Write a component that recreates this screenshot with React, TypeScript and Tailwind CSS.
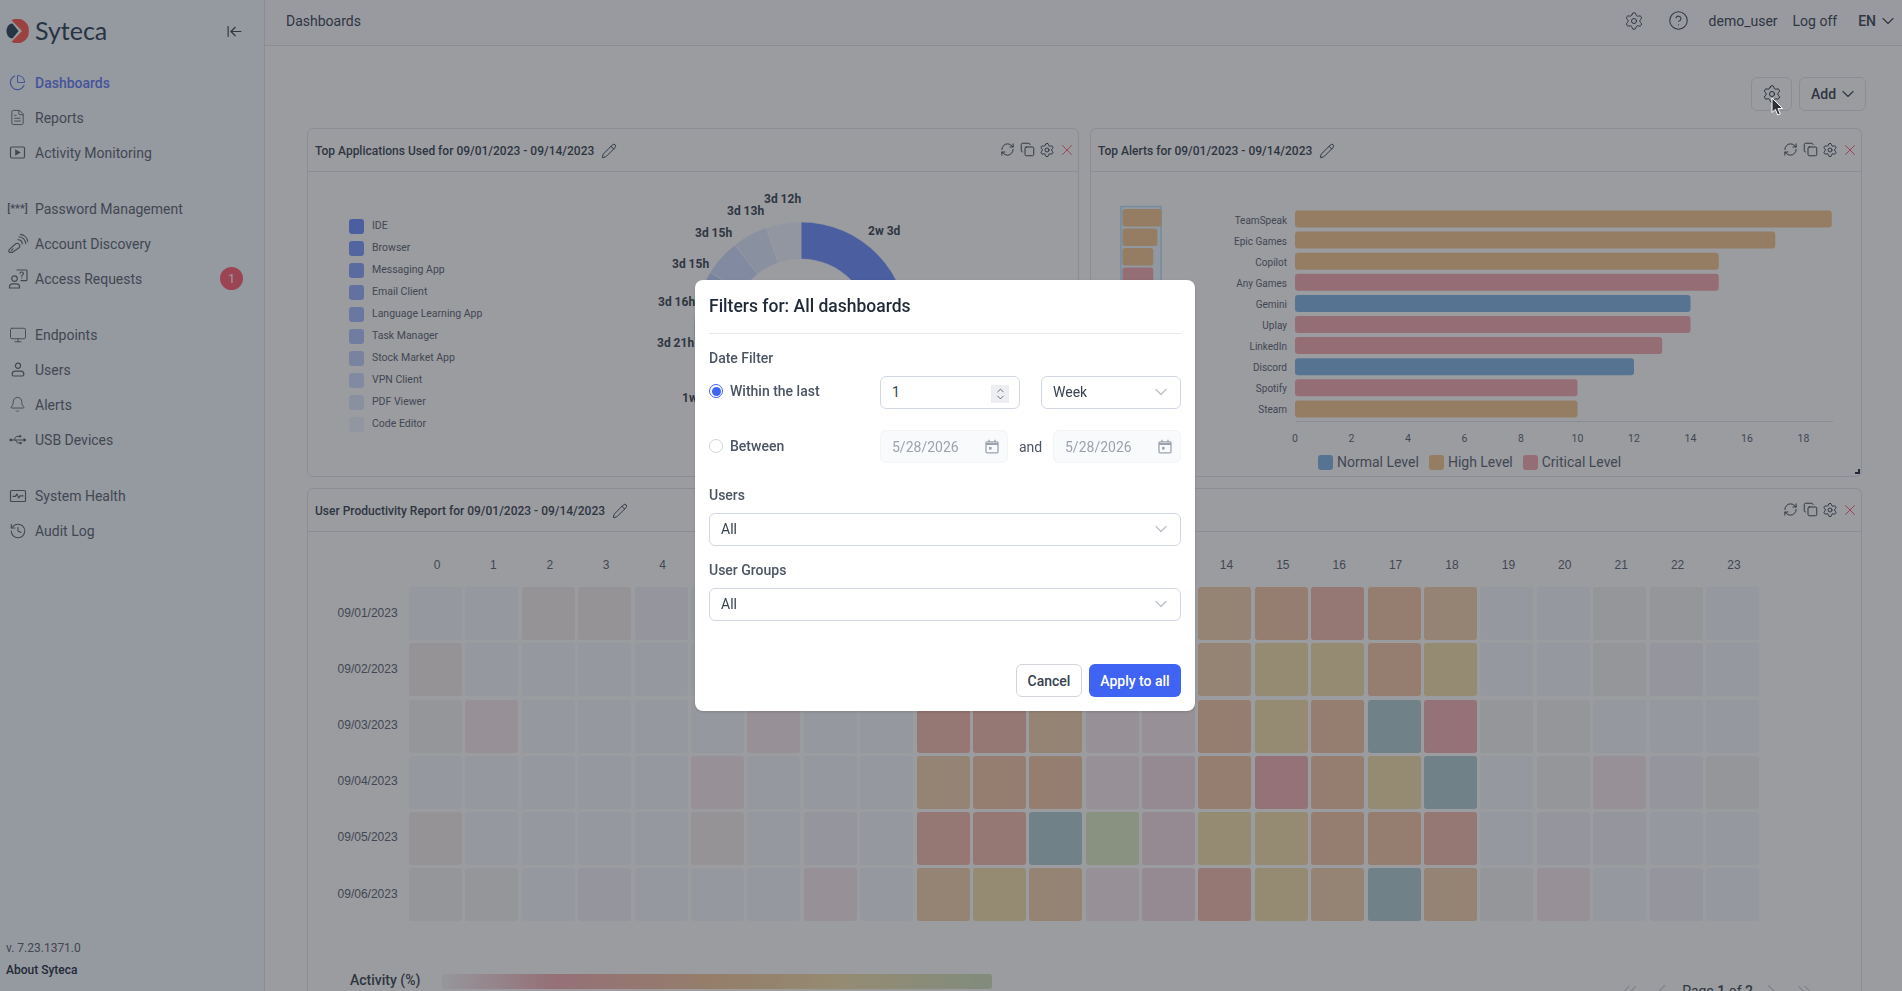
import React from "react";
import {
  ArrowLeftToLine, ChartPie, ChevronDown, ChevronLeft, ChevronRight, ChevronsLeft, ChevronsRight, ChevronUp, CircleHelp, Copy, FileText, History, Monitor, Pencil,
  RefreshCw, Settings, Bell, X,
} from "lucide-react";

function PlayBox() {
  return (
    <svg width="17" height="17" viewBox="0 0 17 17" fill="none" stroke="currentColor" strokeWidth="1.2">
      <rect x="1.5" y="3" width="14" height="11" rx="1.2" />
      <path d="M6.8 6.2v4.6l3.8-2.3z" fill="currentColor" />
    </svg>
  );
}
function KeyWaves() {
  return (
    <svg width="22" height="22" viewBox="0 0 22 22" fill="none" stroke="currentColor" strokeWidth="1.1" strokeLinecap="round">
      <path d="M2.2 16.6l6.2-5.6c1-.9 2.4-.9 3.3 0l.6.7c.9 1 .7 2.3-.3 3.1l-6.7 4.6H2.6l-1-1.3z" />
      <path d="M4.4 17.4l1.8-1.5" />
      <path d="M11 6.6c2.2.1 4.1 2 4.3 4.3" />
      <path d="M12 3.8c3.6.2 6.6 3.2 6.8 6.9" />
      <path d="M13.4 1.4c4 .5 7 3.6 7.4 7.3" />
    </svg>
  );
}
function UserAsk() {
  return (
    <svg width="20" height="20" viewBox="0 0 20 20" fill="none" stroke="currentColor" strokeWidth="1.2" strokeLinecap="round">
      <circle cx="6.5" cy="9.6" r="2.8" />
      <path d="M1.5 19v-1.2c0-1.7 1.4-3 3-3h4c1.6 0 3 1.3 3 3V19z" />
      <path d="M9 1h9.2c.5 0 .8.3.8.8v9c0 .5-.3.8-.8.8H13" />
      <path d="M12 4.4c.2-1 1-1.5 1.9-1.4.9.1 1.6.8 1.5 1.7-.1 1.2-1.6 1.2-1.6 2.5" />
      <path d="M13.8 9v.1" />
    </svg>
  );
}
function UserIcon() {
  return (
    <svg width="14" height="15" viewBox="0 0 14 15" fill="none" stroke="currentColor" strokeWidth="1.2">
      <circle cx="7" cy="3.8" r="2.6" />
      <path d="M1.2 12.2c0-1.7 1.4-3 3-3h5.6c1.6 0 3 1.3 3 3v.6c0 .7-.5 1.2-1.2 1.2H2.4c-.7 0-1.2-.5-1.2-1.2z" />
    </svg>
  );
}
function UsbIcon() {
  return (
    <svg width="18" height="12" viewBox="0 0 18 12" fill="currentColor" stroke="currentColor" strokeWidth="1" strokeLinecap="round" strokeLinejoin="round">
      <circle cx="1.8" cy="6" r="1.4" stroke="none" />
      <path d="M2 6h14" fill="none" />
      <path d="M15.2 4.8 17 6l-1.8 1.2z" />
      <path d="M4.8 6 7.4 2.4h2.4" fill="none" />
      <rect x="10" y="1.2" width="2.2" height="2.2" stroke="none" />
      <path d="M6.4 6 8.6 9h2" fill="none" />
      <circle cx="11.6" cy="9" r="1.3" stroke="none" />
    </svg>
  );
}
function HealthBox() {
  return (
    <svg width="18" height="18" viewBox="0 0 18 18" fill="none" stroke="currentColor" strokeWidth="1.2" strokeLinejoin="round">
      <rect x="1.5" y="3.5" width="15" height="11" rx="1" />
      <path d="M3.5 9.4h3l1.3-2.4 2 4 1.3-2.2h3.4" />
    </svg>
  );
}
function Logo() {
  return (
    <svg width="23" height="24" viewBox="0 0 23 24">
      <path d="M6.5 4.5 12.5 12 6.5 19.5C3 19.5.5 16 .5 12S3 4.5 6.5 4.5z" fill="#3f5266" />
      <path d="M5.5 1.3A11.5 11.5 0 0 1 22.8 12 11.5 11.5 0 0 1 5.5 22.7L16 12z" fill="#ff6a60" />
    </svg>
  );
}
function CalendarIcon() {
  return (
    <svg width="14" height="15" viewBox="0 0 14 15" fill="none" stroke="#9ca3af" strokeWidth="1.3">
      <rect x="1" y="2.8" width="12" height="11" rx="1" />
      <path d="M1 5h12" strokeWidth="2" />
      <path d="M4 .8v2.4M10 .8v2.4" />
      <rect x="4" y="8" width="2.6" height="2.6" fill="#9ca3af" stroke="none" />
    </svg>
  );
}

type NavItem = { label: string; icon: React.ReactNode; active?: boolean; badge?: string };

const navGroups: NavItem[][] = [
  [
    { label: "Dashboards", icon: <ChartPie size={17} strokeWidth={1.5} />, active: true },
    { label: "Reports", icon: <FileText size={17} strokeWidth={1.3} /> },
    { label: "Activity Monitoring", icon: <PlayBox /> },
  ],
  [
    { label: "Password Management", icon: <span className="text-[11px] font-medium tracking-[0px]">[***]</span> },
    { label: "Account Discovery", icon: <KeyWaves /> },
    { label: "Access Requests", icon: <UserAsk />, badge: "1" },
  ],
  [
    { label: "Endpoints", icon: <Monitor size={18} strokeWidth={1.2} /> },
    { label: "Users", icon: <UserIcon /> },
    { label: "Alerts", icon: <Bell size={17} strokeWidth={1.3} /> },
    { label: "USB Devices", icon: <UsbIcon /> },
  ],
  [
    { label: "System Health", icon: <HealthBox /> },
    { label: "Audit Log", icon: <History size={18} strokeWidth={1.4} /> },
  ],
];

function Sidebar() {
  return (
    <aside className="flex h-full w-[265px] shrink-0 flex-col border-r border-[#e5e7eb] bg-[#f6fbff]">
      <div className="flex h-[65px] shrink-0 items-start pl-[6px] pt-[19px]">
        <Logo />
        <span className="-mt-[1px] ml-[6px] text-[25px] leading-[25px] text-[#3f5266] [font-family:Lato,sans-serif]">Syteca</span>
        <ArrowLeftToLine size={17} strokeWidth={1.6} className="ml-auto mr-[21px] mt-[4px] text-[#4b5563]" />
      </div>
      <nav className="flex flex-col gap-[21px]">
        {navGroups.map((group, i) => (
          <ul key={i} className="flex flex-col">
            {group.map((item) => (
              <li key={item.label} className={`flex h-[35px] items-center text-sm ${item.active ? "font-medium text-[#7088f5]" : "text-[#6b7280]"}`}>
                <span className="flex w-[35px] shrink-0 items-center justify-center">{item.icon}</span>
                <span>{item.label}</span>
                {item.badge && (
                  <span className="ml-auto mr-[21px] flex h-[23px] w-[23px] items-center justify-center rounded-full bg-[#ff6d80] text-xs text-white">{item.badge}</span>
                )}
              </li>
            ))}
          </ul>
        ))}
      </nav>
      <div className="mt-auto flex flex-col pb-[10px] pl-[6px] text-xs">
        <span className="leading-[22px] text-[#6b7280]">v. 7.23.1371.0</span>
        <span className="leading-[22px] font-medium text-[#374151]">About Syteca</span>
      </div>
    </aside>
  );
}

function TopBar() {
  return (
    <header className="flex h-[46px] shrink-0 items-center border-b border-[#e5e7eb] bg-[#fbfcff] pb-[4px] pl-[21px] pr-[4px] text-sm text-[#4b5563]">
      <span>Dashboards</span>
      <Settings size={20} strokeWidth={1.2} className="ml-auto" />
      <CircleHelp size={21} strokeWidth={1.2} className="ml-[24px]" />
      <span className="ml-[20px]">demo_user</span>
      <span className="ml-[15px]">Log off</span>
      <span className="ml-[21px] font-medium">EN</span>
      <ChevronDown size={20} strokeWidth={1.3} className="ml-[2px]" />
    </header>
  );
}

function CardIcons() {
  return (
    <div className="-mt-[2px] ml-auto flex items-center pr-[1px] text-[#374151]">
      <span className="flex w-[20px] justify-center"><RefreshCw size={15} strokeWidth={1.4} /></span>
      <span className="flex w-[20px] justify-center"><Copy size={15} strokeWidth={1.4} /></span>
      <span className="flex w-[20px] justify-center"><Settings size={16} strokeWidth={1.3} /></span>
      <span className="flex w-[20px] justify-center"><X size={18} strokeWidth={1.3} className="text-[#ff6d80]" /></span>
    </div>
  );
}

function Card({ title, children, className }: { title: string; children: React.ReactNode; className?: string }) {
  return (
    <section className={`rounded-[6px] border border-[#e5e7eb] bg-white ${className ?? ""}`}>
      <div className="flex h-[43px] items-center border-b border-[#e5e7eb] pl-[7px] pt-[1px] text-xs font-medium text-[#4b5563]">
        <span>{title}</span>
        <Pencil size={16} strokeWidth={1.3} className="ml-[7px] text-[#374151]" />
        <CardIcons />
      </div>
      {children}
    </section>
  );
}

const legend = [
  { name: "IDE", cls: "bg-[#7a99ff]" },
  { name: "Browser", cls: "bg-[#87a3ff]" },
  { name: "Messaging App", cls: "bg-[#94adff]" },
  { name: "Email Client", cls: "bg-[#a1b8ff]" },
  { name: "Language Learning App", cls: "bg-[#aec2ff]" },
  { name: "Task Manager", cls: "bg-[#baccff]" },
  { name: "Stock Market App", cls: "bg-[#c7d6ff]" },
  { name: "VPN Client", cls: "bg-[#d4e1ff]" },
  { name: "PDF Viewer", cls: "bg-[#e1ebff]" },
  { name: "Code Editor", cls: "bg-[#eef5ff]" },
];

const pie = [
  { v: 408, c: "#7a99ff" }, { v: 220, c: "#87a3ff" }, { v: 190, c: "#94adff" }, { v: 168, c: "#a1b8ff" }, { v: 168, c: "#aec2ff" },
  { v: 93, c: "#baccff" }, { v: 88, c: "#c7d6ff" }, { v: 87, c: "#d4e1ff" }, { v: 85, c: "#e1ebff" }, { v: 84, c: "#eef5ff" },
];

function arc(cx: number, cy: number, R: number, r: number, a0: number, a1: number) {
  const p = (rad: number, a: number) => `${cx + rad * Math.sin(a)} ${cy - rad * Math.cos(a)}`;
  const large = a1 - a0 > Math.PI ? 1 : 0;
  return `M${p(R, a0)}A${R} ${R} 0 ${large} 1 ${p(R, a1)}L${p(r, a1)}A${r} ${r} 0 ${large} 0 ${p(r, a0)}Z`;
}

function Donut() {
  const total = pie.reduce((s, x) => s + x.v, 0);
  let acc = 0;
  const labels: [string, number, number][] = [
    ["3d 12h", 764, 204], ["3d 13h", 727, 216], ["3d 15h", 695, 238],
    ["3d 15h", 672, 269], ["3d 16h", 658, 307], ["3d 21h", 657, 348],
    ["1w", 682, 403], ["2w 3d", 868, 236],
  ];
  return (
    <svg width="480" height="303" viewBox="599 173 480 303" className="shrink-0">
      {pie.map((s, i) => {
        const a0 = (acc / total) * Math.PI * 2;
        acc += s.v;
        const a1 = (acc / total) * Math.PI * 2;
        return <path key={i} d={arc(801, 330, 107, 70, a0, a1)} fill={s.c} stroke="#fff" strokeWidth="0.5" />;
      })}
      {labels.map(([t, x, y], i) => (
        <text key={i} x={x} y={y} fontSize="12" fontWeight="700" fill="#4b5563" fontFamily="Roboto, sans-serif">{t}</text>
      ))}
    </svg>
  );
}

const bars = [
  { n: "TeamSpeak", v: 19, c: "#f4cb98" }, { n: "Epic Games", v: 17, c: "#f4cb98" }, { n: "Copilot", v: 15, c: "#f4cb98" },
  { n: "Any Games", v: 15, c: "#f5b3b7" }, { n: "Gemini", v: 14, c: "#8cbde8" }, { n: "Uplay", v: 14, c: "#f5b3b7" },
  { n: "LinkedIn", v: 13, c: "#f5b3b7" }, { n: "Discord", v: 12, c: "#8cbde8" }, { n: "Spotify", v: 10, c: "#f5b3b7" },
  { n: "Steam", v: 10, c: "#f4cb98" },
];

function BarChart() {
  const x0 = 1295;
  const u = 28.25;
  return (
    <svg width="770" height="275" viewBox="1091 173 770 275" className="block">
      <rect x="1121" y="207.5" width="40" height="220" fill="#eef8ff" stroke="#bce4ff" strokeWidth="1.5" />
      {bars.map((b, i) => (
        <rect key={i} x="1122.5" y={210 + i * 19.5} width={b.v * 2.05} height="17.5" rx="2.5" fill={b.c} />
      ))}
      {bars.map((b, i) => (
        <g key={b.n}>
          <text x="1287" y={224.5 + i * 21.1} textAnchor="end" fontSize="10" fill="#6b7280" fontFamily="Roboto, sans-serif">{b.n}</text>
          <rect x={x0} y={211.5 + i * 21.1} width={b.v * u} height="17" rx="3" fill={b.c} />
        </g>
      ))}
      <path d="M1296 422.5H1833" stroke="#e5e7eb" />
      {[0, 2, 4, 6, 8, 10, 12, 14, 16, 18].map((t) => (
        <text key={t} x={x0 + t * u} y="443" textAnchor="middle" fontSize="10.5" fill="#6b7280" fontFamily="Roboto, sans-serif">{t}</text>
      ))}
    </svg>
  );
}

function ChartLegendItem({ cls, label }: { cls: string; label: string }) {
  return (
    <span className="flex items-center gap-[4px]">
      <span className={`h-[15px] w-[15px] rounded-[3px] ${cls}`} />
      {label}
    </span>
  );
}

const heat = [
  "bbppLbbbbbbbbbTBRBTbbggb",
  "pbbbbbbbbbbbbbTOOBObbgLb",
  "gqbbbbqbbRRTmmBOBEPggbbb",
  "bbbbbqbbbTBBmMBPBOEbglLg",
  "pbbbbpbLbRREGMOOBBRbLLbb",
  "ggbLbbblbTOTmMROTETglbLb",
];

const heatCls: Record<string, string> = {
  b: "bg-[#f5f9fe]", g: "bg-[#f6f6f6]", p: "bg-[#f7f1f1]", L: "bg-[#f6f5fb]", l: "bg-[#f8ecef]", q: "bg-[#f8ebee]",
  T: "bg-[#f5d8b4]", B: "bg-[#f5ccb0]", R: "bg-[#f5c2b4]", O: "bg-[#f5e3b2]", E: "bg-[#b8d4d6]", P: "bg-[#f5b8bc]",
  M: "bg-[#f5e2e6]", m: "bg-[#f8ecef]", G: "bg-[#e2efcc]",
};

const dates = ["09/01/2023", "09/02/2023", "09/03/2023", "09/04/2023", "09/05/2023", "09/06/2023"];

function Heatmap() {
  return (
    <div className="pt-[21px]">
      <div className="grid grid-cols-[97.6px_repeat(24,53px)] gap-x-[3.4px] gap-y-[3.2px]">
        <span className="h-[31px]" />
        {Array.from({ length: 24 }, (_, i) => (
          <span key={i} className="pl-[3px] text-center text-xs leading-[24px] text-[#6b7280] [font-family:'Liberation_Sans',sans-serif]">{i}</span>
        ))}
        {dates.map((d, r) => (
          <React.Fragment key={d}>
            <span className="flex h-[53px] items-center justify-end pb-[2px] pr-[8px] text-xs text-[#6b7280] [font-family:'Liberation_Sans',sans-serif]">{d}</span>
            {heat[r].split("").map((c, k) => (
              <span key={k} className={`h-[53px] rounded-[3px] ${heatCls[c]}`} />
            ))}
          </React.Fragment>
        ))}
      </div>
      <div className="mt-[49px] flex items-start pl-[42px] pr-[46px]">
        <span className="text-sm font-medium leading-[20px] text-[#4b5563]">Activity (%)</span>
        <span className="ml-[22px] mt-[4px] h-[15px] w-[550px] rounded-[3px] bg-[linear-gradient(90deg,#f5f6f8_0%,#f5b7bc_20%,#f5cda4_50%,#f5e3b2_72%,#d4e4c4_100%)]" />
        <div className="ml-auto mt-[10px] flex items-center text-sm text-[#4b5563]">
          <ChevronsLeft size={22} strokeWidth={1.3} className="text-[#d1d5db]" />
          <ChevronLeft size={22} strokeWidth={1.3} className="ml-[10px] text-[#d1d5db]" />
          <span className="ml-[9px]">Page <b className="font-medium">1</b> of <b className="font-medium">2</b></span>
          <ChevronRight size={22} strokeWidth={1.3} className="ml-[7px] text-[#d1d5db]" />
          <ChevronsRight size={22} strokeWidth={1.3} className="ml-[11px] text-[#d1d5db]" />
        </div>
      </div>
    </div>
  );
}

function Dashboard() {
  return (
    <div className="min-h-0 flex-1 overflow-hidden bg-white pl-[42px] pr-[40px]">
      <div className="-mr-[4px] mb-[17px] flex justify-end gap-[7px] pt-[31px]">
        <button className="flex h-[34px] w-[41px] items-center justify-center rounded-[6px] border border-[#e5e7eb] text-[#374151]">
          <Settings size={20} strokeWidth={1.2} />
        </button>
        <button className="flex h-[34px] w-[67px] items-center gap-[2px] rounded-[6px] border border-[#e5e7eb] pb-[1px] pl-[11px] text-sm font-medium text-[#4b5563]">
          Add <ChevronDown size={20} strokeWidth={1.3} />
        </button>
      </div>
      <div className="grid grid-cols-2 gap-[11px]">
        <Card title="Top Applications Used for 09/01/2023 - 09/14/2023" className="h-[349px]">
          <div className="flex">
            <ul className="flex w-[291px] shrink-0 flex-col pl-[41px] pt-[43px]">
              {legend.map((l) => (
                <li key={l.name} className="flex h-[22px] items-center gap-[8px] text-[10.5px] text-[#6b7280]">
                  <span className={`h-[15px] w-[15px] rounded-[3px] ${l.cls}`} />
                  {l.name}
                </li>
              ))}
            </ul>
            <Donut />
          </div>
        </Card>
        <Card title="Top Alerts for 09/01/2023 - 09/14/2023" className="relative h-[349px]">
          <BarChart />
          <div className="ml-[227px] flex h-[30px] items-center gap-[10px] text-sm text-[#6b7280]">
            <ChartLegendItem cls="bg-[#8cbde8]" label="Normal Level" />
            <ChartLegendItem cls="bg-[#f4cb98]" label="High Level" />
            <ChartLegendItem cls="bg-[#f5b3b7]" label="Critical Level" />
          </div>
          <span className="absolute bottom-[2px] right-[1px] h-[5px] w-[5px] border-b-2 border-r-2 border-[#374151]" />
        </Card>
        <Card title="User Productivity Report for 09/01/2023 - 09/14/2023" className="col-span-2">
          <Heatmap />
        </Card>
      </div>
    </div>
  );
}

function Radio({ checked }: { checked?: boolean }) {
  return checked ? (
    <span className="flex h-[14px] w-[14px] items-center justify-center rounded-full border border-[#3f63f3] bg-white">
      <span className="h-[9px] w-[9px] rounded-full bg-[#3f63f3]" />
    </span>
  ) : (
    <span className="h-[14px] w-[14px] rounded-full border border-[#d1d5db] bg-white" />
  );
}

function SelectBox({ value, className }: { value: string; className?: string }) {
  return (
    <div className={`flex h-[33px] items-center justify-between rounded-[6px] border border-[#d1d7e5] bg-white pb-[1px] pl-[11px] pr-[9px] text-sm text-[#374151] ${className ?? ""}`}>
      <span>{value}</span>
      <ChevronDown size={20} strokeWidth={1.6} className="text-[#bfc2c9]" />
    </div>
  );
}

function DateBox({ className }: { className?: string }) {
  return (
    <div className={`flex h-[33px] items-center justify-between rounded-[6px] border border-[#f3f4f6] bg-[#f9fafb] pl-[11px] pr-[8px] text-sm text-[#9ca3af] ${className ?? ""}`}>
      <span>5/28/2026</span>
      <CalendarIcon />
    </div>
  );
}

function Modal() {
  return (
    <div className="fixed inset-0 flex items-center justify-center bg-[rgba(5,8,17,0.4)] pr-[12px]">
      <div className="flex h-[431px] w-[500px] flex-col rounded-[8px] bg-white px-[14px] shadow-sm">
        <h2 className="flex h-[54px] shrink-0 items-center border-b border-[#e5e7eb] text-[17.5px] font-medium text-[#1f2937]">Filters for: All dashboards</h2>
        <span className="mt-[14px] text-sm font-medium leading-[20px] text-[#4b5563]">Date Filter</span>
        <div className="mt-[8px] flex h-[33px] items-start">
          <label className="flex w-[171px] items-center gap-[7px] pt-[5px] text-sm font-medium text-[#4b5563]"><Radio checked />Within the last</label>
          <div className="relative flex h-[33px] w-[140px] items-center rounded-[6px] border border-[#d1d7e5] bg-white pb-[1px] pl-[11px] text-sm text-[#374151]">
            1
            <span className="absolute right-[10px] top-[8px] flex h-[18px] w-[18px] flex-col items-center justify-center bg-[#eceef1] text-[#4b5563]">
              <ChevronUp size={13} strokeWidth={1.8} className="-mb-[2px]" />
              <ChevronDown size={13} strokeWidth={1.8} className="-mt-[2px]" />
            </span>
          </div>
          <SelectBox value="Week" className="ml-[21px] w-[140px]" />
        </div>
        <div className="mt-[21px] flex h-[33px] items-start">
          <label className="flex w-[171px] items-center gap-[7px] pt-[6px] text-sm font-medium text-[#4b5563]"><Radio />Between</label>
          <DateBox className="w-[128px]" />
          <span className="ml-[11px] w-[33px] pt-[7px] text-sm text-[#4b5563]">and</span>
          <DateBox className="ml-[1px] w-[128px]" />
        </div>
        <span className="mt-[22px] text-sm font-medium leading-[20px] text-[#4b5563]">Users</span>
        <SelectBox value="All" className="mt-[8px]" />
        <span className="mt-[14px] text-sm font-medium leading-[20px] text-[#4b5563]">User Groups</span>
        <SelectBox value="All" className="mt-[8px]" />
        <div className="mt-auto flex justify-end gap-[7px] pb-[14px]">
          <button className="h-[33px] w-[66px] rounded-[6px] border border-[#d1d5db] bg-white text-sm font-medium text-[#374151]">Cancel</button>
          <button className="h-[33px] w-[92px] rounded-[6px] bg-[#3f63f3] text-sm font-medium text-white">Apply to all</button>
        </div>
      </div>
    </div>
  );
}

function Cursor() {
  return (
    <svg width="14" height="20" viewBox="0 0 14 20" className="pointer-events-none fixed left-[1771px] top-[97px]">
      <path d="M1 1v14.5l3.4-3.1 2.3 5.6 2.6-1.1-2.4-5.4h4.7z" fill="#2b2f36" stroke="#fff" strokeWidth="1" />
    </svg>
  );
}

export default function App() {
  return (
    <div className="flex h-screen overflow-hidden [font-family:Roboto,sans-serif]">
      <Sidebar />
      <main className="flex min-w-0 flex-1 flex-col">
        <TopBar />
        <Dashboard />
      </main>
      <Modal />
      <Cursor />
    </div>
  );
}
